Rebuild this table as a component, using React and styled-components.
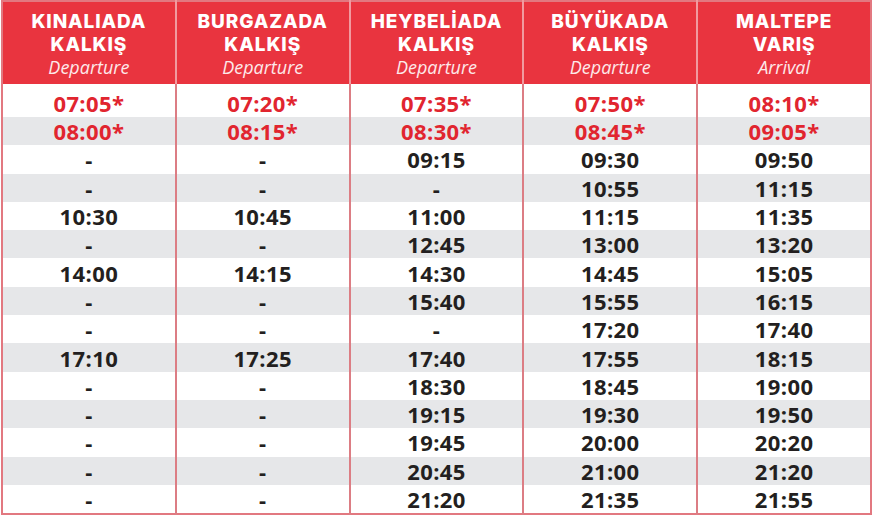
import React from "react";
import styled, { createGlobalStyle } from "styled-components";

const Global = createGlobalStyle`
  html, body { margin: 0; padding: 0; background: #ffffff; }
  body { width: 874px; height: 517px; overflow: hidden; }
`;

const Page = styled.div`
  padding: 0 0 0 1px;
`;

const Table = styled.table`
  width: 871px;
  border-collapse: collapse;
  table-layout: fixed;
  border: 2px solid #e27880;
  font-family: "Open Sans", "Noto Sans", sans-serif;
`;

const HeadCell = styled.th`
  background: #e9343f;
  color: #ffffff;
  height: 82px;
  padding: 0;
  vertical-align: top;
  border-left: 2px solid #f19aa0;
  text-align: center;
  &:first-child { border-left: none; }
`;

const Station = styled.div`
  font-family: "Inter", "DejaVu Sans", sans-serif;
  font-weight: 800;
  font-size: 19px;
  letter-spacing: 0.9px;
  line-height: 23px;
  padding-top: 8px;
`;

const Sub = styled.div`
  font-family: "Open Sans", sans-serif;
  font-style: italic;
  font-weight: 400;
  font-size: 18px;
  line-height: 23px;
  color: #fde9ea;
`;

const Row = styled.tr`
  background: ${(p) => (p.$striped ? "#e6e7e9" : "#ffffff")};
`;

const Cell = styled.td`
  box-sizing: border-box;
  height: ${(p) => (p.$first ? "33px" : "28.3px")};
  padding: ${(p) => (p.$first ? "5px 0 0" : "0")};
  text-align: center;
  vertical-align: middle;
  border-left: 2px solid #dc7d84;
  font-weight: 700;
  font-size: 22px;
  letter-spacing: 0.4px;
  line-height: 28px;
  color: ${(p) => (p.$red ? "#e1252f" : "#231f20")};
  &:first-child { border-left: none; }
`;

const headers = [
  ["KINALIADA", "KALKIŞ", "Departure"],
  ["BURGAZADA", "KALKIŞ", "Departure"],
  ["HEYBELİADA", "KALKIŞ", "Departure"],
  ["BÜYÜKADA", "KALKIŞ", "Departure"],
  ["MALTEPE", "VARIŞ", "Arrival"],
];

const columns = [
  ["07:05*", "08:00*", "-", "-", "10:30", "-", "14:00", "-", "-", "17:10", "-", "-", "-", "-", "-"],
  ["07:20*", "08:15*", "-", "-", "10:45", "-", "14:15", "-", "-", "17:25", "-", "-", "-", "-", "-"],
  ["07:35*", "08:30*", "09:15", "-", "11:00", "12:45", "14:30", "15:40", "-", "17:40", "18:30", "19:15", "19:45", "20:45", "21:20"],
  ["07:50*", "08:45*", "09:30", "10:55", "11:15", "13:00", "14:45", "15:55", "17:20", "17:55", "18:45", "19:30", "20:00", "21:00", "21:35"],
  ["08:10*", "09:05*", "09:50", "11:15", "11:35", "13:20", "15:05", "16:15", "17:40", "18:15", "19:00", "19:50", "20:20", "21:20", "21:55"],
];

export default function App() {
  const rows = columns[0].map((_, i) => columns.map((c) => c[i]));
  return (
    <Page>
      <Global />
      <Table>
        <thead>
          <tr>
            {headers.map(([a, b, c]) => (
              <HeadCell key={a}>
                <Station>
                  {a}
                  <br />
                  {b}
                </Station>
                <Sub>{c}</Sub>
              </HeadCell>
            ))}
          </tr>
        </thead>
        <tbody>
          {rows.map((r, i) => (
            <Row key={i} $striped={i % 2 === 1}>
              {r.map((v, j) => (
                <Cell key={j} $first={i === 0} $red={v.endsWith("*")}>
                  {v}
                </Cell>
              ))}
            </Row>
          ))}
        </tbody>
      </Table>
    </Page>
  );
}
